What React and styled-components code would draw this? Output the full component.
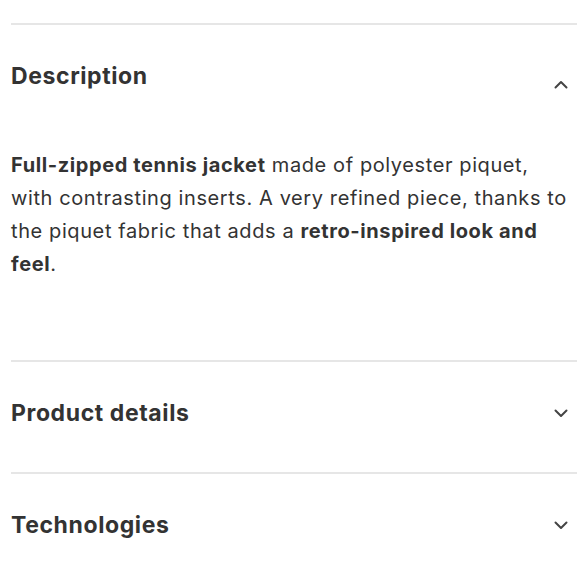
import React from "react";
import styled, { createGlobalStyle } from "styled-components";

const Global = createGlobalStyle`
  html, body { margin: 0; padding: 0; background: #fff; }
  body { font-family: Inter, "Liberation Sans", Arial, sans-serif; color: #333; }
`;

const Page = styled.div`
  padding: 23px 2px 0 11px;
`;

const Section = styled.section`
  border-top: 2px solid #e6e6e6;
`;

const Header = styled.div`
  box-sizing: border-box;
  height: 110px;
  padding-top: 37px;
  display: flex;
  align-items: flex-start;
  justify-content: space-between;
`;

const Title = styled.h2`
  margin: 0;
  font-size: 23px;
  line-height: 28px;
  font-weight: 700;
  letter-spacing: 0.6px;
  color: #333;
`;

const Chevron = styled.svg`
  width: 14px;
  height: 9px;
  margin-right: 9px;
  margin-top: ${(p) => (p.$up ? "17.5px" : "9.5px")};
`;

const Body = styled.div`
  padding: 14px 8px 79px 0;
  font-size: 20px;
  line-height: 33px;
  letter-spacing: 0.6px;
  color: #333;
  b { font-weight: 700; }
`;

function Icon({ up }) {
  return (
    <Chevron $up={up} viewBox="0 0 14 9" fill="none">
      <path
        d={up ? "M1.5 7.5 L7 2 L12.5 7.5" : "M1.5 1.5 L7 7 L12.5 1.5"}
        stroke="#444"
        strokeWidth="2"
        strokeLinecap="round"
        strokeLinejoin="round"
      />
    </Chevron>
  );
}

export default function App() {
  return (
    <>
      <Global />
      <Page>
        <Section>
          <Header>
            <Title>Description</Title>
            <Icon up />
          </Header>
          <Body>
            <b>Full-zipped tennis jacket</b> made of polyester piquet, with
            contrasting inserts. A very refined piece, thanks to the piquet
            fabric that adds a <b>retro-inspired look and feel</b>.
          </Body>
        </Section>
        <Section>
          <Header>
            <Title>Product details</Title>
            <Icon />
          </Header>
        </Section>
        <Section>
          <Header>
            <Title>Technologies</Title>
            <Icon />
          </Header>
        </Section>
      </Page>
    </>
  );
}
